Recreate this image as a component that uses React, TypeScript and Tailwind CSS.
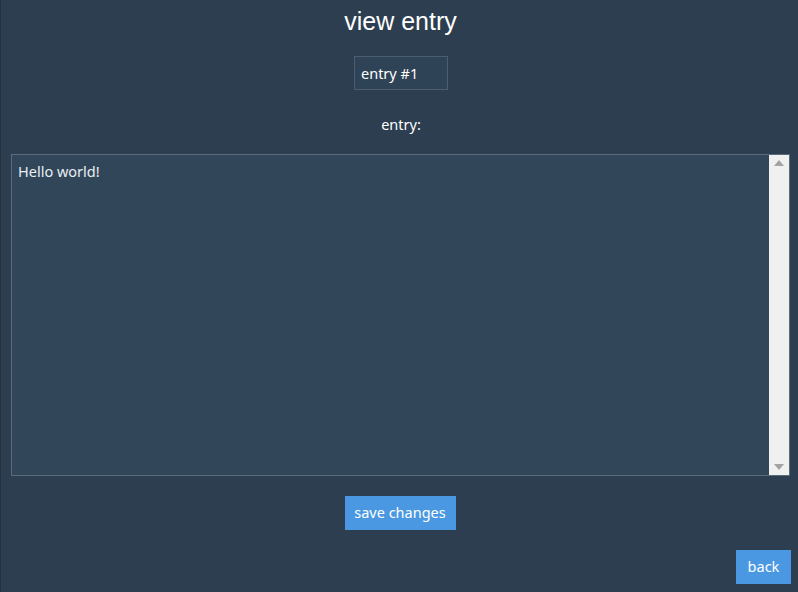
export default function App() {
  return (
    <div className="relative h-[592px] w-[798px] overflow-hidden bg-[#2c3e50] font-['Noto_Sans',sans-serif] text-white">
      <div className="absolute left-0 top-0 h-full w-px bg-[#243240]" />
      <h1 className="pl-[3px] pt-[6px] text-center font-['Liberation_Sans',sans-serif] text-[25px] leading-[30px]">
        view entry
      </h1>
      <div className="mt-[20px] flex justify-center pl-[4px]">
        <input
          defaultValue="entry #1"
          className="h-[34px] w-[94px] border border-[#4b5d6f] bg-[#2f4357] px-[6px] text-[14.5px] text-white outline-none"
        />
      </div>
      <div className="mt-[24px] pl-[4px] text-center text-[14.5px] leading-[20px]">entry:</div>
      <div className="ml-[11px] mr-[8px] mt-[20px] flex h-[322px] border border-[#5a6b7b] bg-[#32465a]">
        <div className="flex-1 px-[6px] py-[5px] text-[14.5px] leading-[22px] text-[#e8eef3]">Hello world!</div>
        <div className="flex w-[20px] flex-col items-center justify-between bg-[#f0f0f0] py-[5px]">
          <div className="h-0 w-0 border-x-[5px] border-b-[6px] border-x-transparent border-b-[#a3a3a3]" />
          <div className="h-0 w-0 border-x-[5px] border-t-[6px] border-x-transparent border-t-[#a3a3a3]" />
        </div>
      </div>
      <div className="mt-[20px] flex justify-center pl-[2px]">
        <button className="h-[34px] w-[111px] bg-[#4a98e2] text-[14.5px] text-white">save changes</button>
      </div>
      <div className="mt-[20px] flex justify-end pr-[7px]">
        <button className="h-[34px] w-[55px] bg-[#4a98e2] text-[14.5px] text-white">back</button>
      </div>
    </div>
  );
}
